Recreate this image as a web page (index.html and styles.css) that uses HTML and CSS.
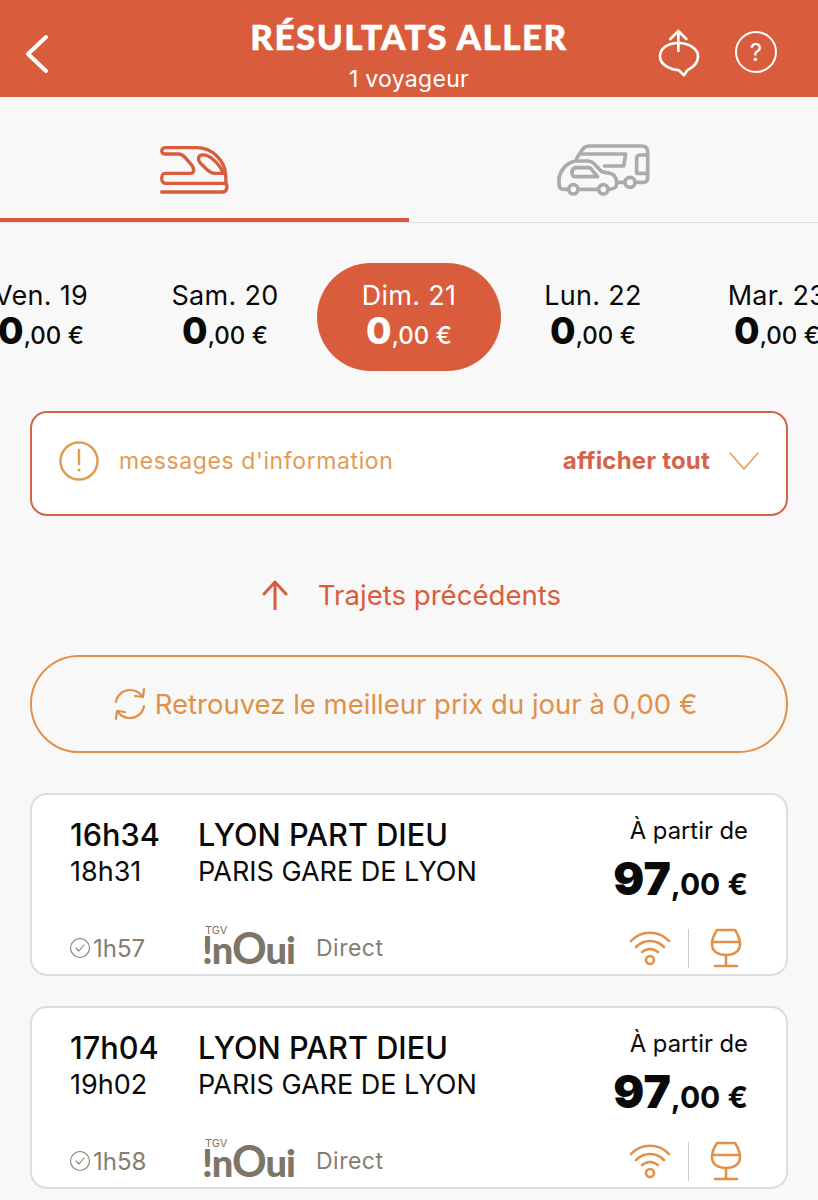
FILE: index.html
```html
<!DOCTYPE html>
<html lang="fr">
<head>
    <meta charset="UTF-8">
    <meta name="viewport" content="width=device-width, initial-scale=1.0">
    <title>Résultats aller</title>
    <link rel="stylesheet" href="styles.css">
</head>
<body>
    <header class="topbar">
        <div class="topbar-left">
            <svg class="back" width="24" height="40" viewBox="0 0 24 40"><path d="M21 3 L3 20 L21 37"/></svg>
        </div>
        <div class="topbar-title">
            <h1>RÉSULTATS ALLER</h1>
            <p>1 voyageur</p>
        </div>
        <div class="topbar-right">
            <svg class="share" width="50" height="60" viewBox="45 20 140 180"><path d="M113 92 V32 M89 56 L113 32 L137 56"/><path d="M113 68 C80 68 58 85 58 108 C58 135 90 148 115 150 L130 165 L140 150 C160 140 172 125 172 108 C172 85 145 68 113 68 Z"/></svg>
            <div class="help">?</div>
        </div>
    </header>

    <nav class="tabs">
        <div class="tab tab-active">
            <svg class="tab-train" width="110" height="75" viewBox="0 0 330 225"><path d="M75 53 H170 C215 53 255 90 257 135 L258 160 H75 C62 160 62 130 75 130 H150 C162 130 165 118 155 105 L135 82 C128 74 122 72 115 72 H75 C62 72 62 53 75 53 Z"/><path d="M185 75 C205 72 235 95 250 130 H225 C210 130 200 118 180 98 C172 88 175 76 185 75 Z"/><path d="M65 186 H248 C262 186 264 165 256 160"/></svg>
        </div>
        <div class="tab">
            <svg class="tab-car" width="120" height="75" viewBox="0 0 360 225"><path d="M95 85 L113 58 C118 50 125 48 135 48 H290 C302 48 308 55 308 65 V145 C308 153 302 157 295 157 H270"/><circle cx="255" cy="157" r="15"/><path d="M240 157 H220"/><path d="M110 72 H242 L236 108 H178"/><path d="M302 75 H284 C278 75 275 80 275 85 V130 H302"/><path d="M70 178 H55 C45 178 42 170 42 160 V145 C45 125 60 100 90 93 H130 C145 93 155 110 170 125 L195 130 C208 133 215 145 215 160 C215 172 210 178 190 178"/><path d="M160 178 H100"/><circle cx="85" cy="178" r="14"/><circle cx="175" cy="178" r="14"/><path d="M90 113 H135 L158 140 H90 C80 140 76 118 90 113 Z"/></svg>
        </div>
    </nav>

    <section class="dates">
        <div class="date"><span class="date-day">Ven. 19</span><span class="date-price"><b>0</b>,00 €</span></div>
        <div class="date"><span class="date-day">Sam. 20</span><span class="date-price"><b>0</b>,00 €</span></div>
        <div class="date date-active"><span class="date-day">Dim. 21</span><span class="date-price"><b>0</b>,00 €</span></div>
        <div class="date"><span class="date-day">Lun. 22</span><span class="date-price"><b>0</b>,00 €</span></div>
        <div class="date"><span class="date-day">Mar. 23</span><span class="date-price"><b>0</b>,00 €</span></div>
    </section>

    <section class="info">
        <svg class="info-icon" width="42" height="42" viewBox="0 0 42 42"><circle cx="21" cy="21" r="18.5"/><path d="M21 10 V24"/><circle class="dot" cx="21" cy="30" r="1.6"/></svg>
        <span class="info-text">messages d'information</span>
        <span class="info-all">afficher tout</span>
        <svg class="info-chevron" width="30" height="20" viewBox="0 0 30 20"><path d="M1 2 L15 18 L29 2"/></svg>
    </section>

    <div class="previous">
        <svg width="26" height="30" viewBox="0 0 26 30"><path d="M13 29 V2 M2 14 L13 2 L24 14"/></svg>
        <span>Trajets précédents</span>
    </div>

    <div class="best-price">
        <svg width="34" height="34" viewBox="0 0 34 34"><path d="M3 15 C4 8 10 3 17 3 C22 3 26 5 29 9"/><path d="M31 2 L30 10 L22 9"/><path d="M31 19 C30 26 24 31 17 31 C12 31 8 29 5 25"/><path d="M3 32 L4 24 L12 25"/></svg>
        <span>Retrouvez le meilleur prix du jour à 0,00 €</span>
    </div>

    <main class="results">
        <article class="card">
            <div class="card-main">
                <div class="times"><strong>16h34</strong><span>18h31</span></div>
                <div class="stations"><strong>LYON PART DIEU</strong><span>PARIS GARE DE LYON</span></div>
                <div class="price"><span class="price-from">À partir de</span><span class="price-value"><b>97</b>,00 €</span></div>
            </div>
            <div class="card-foot">
                <div class="duration">
                    <svg width="22" height="22" viewBox="0 0 22 22"><circle cx="11" cy="11" r="9.5"/><path d="M7 11 L10 14 L15 8"/></svg>
                    <span>1h57</span>
                </div>
                <div class="train-type">
                    <div class="logo"><span class="logo-tgv">TGV</span><span class="logo-name">!n<i>O</i>ui</span></div>
                    <span class="direct">Direct</span>
                </div>
                <div class="services">
                    <svg width="42" height="38" viewBox="0 0 42 38"><path d="M2 12 C12 1 30 1 40 12"/><path d="M7 18 C15 10 27 10 35 18"/><path d="M13 23 C18 19 24 19 29 23"/><circle cx="21" cy="31" r="4"/></svg>
                    <div class="services-sep"></div>
                    <svg width="32" height="40" viewBox="0 0 32 40"><path d="M7 2 H25 C29 8 30 13 30 16 C30 24 23 27 16 27 C9 27 2 24 2 16 C2 13 3 8 7 2 Z"/><path d="M2 14 H30"/><path d="M16 27 V37 M5 38 H27"/></svg>
                </div>
            </div>
        </article>

        <article class="card">
            <div class="card-main">
                <div class="times"><strong>17h04</strong><span>19h02</span></div>
                <div class="stations"><strong>LYON PART DIEU</strong><span>PARIS GARE DE LYON</span></div>
                <div class="price"><span class="price-from">À partir de</span><span class="price-value"><b>97</b>,00 €</span></div>
            </div>
            <div class="card-foot">
                <div class="duration">
                    <svg width="22" height="22" viewBox="0 0 22 22"><circle cx="11" cy="11" r="9.5"/><path d="M7 11 L10 14 L15 8"/></svg>
                    <span>1h58</span>
                </div>
                <div class="train-type">
                    <div class="logo"><span class="logo-tgv">TGV</span><span class="logo-name">!n<i>O</i>ui</span></div>
                    <span class="direct">Direct</span>
                </div>
                <div class="services">
                    <svg width="42" height="38" viewBox="0 0 42 38"><path d="M2 12 C12 1 30 1 40 12"/><path d="M7 18 C15 10 27 10 35 18"/><path d="M13 23 C18 19 24 19 29 23"/><circle cx="21" cy="31" r="4"/></svg>
                    <div class="services-sep"></div>
                    <svg width="32" height="40" viewBox="0 0 32 40"><path d="M7 2 H25 C29 8 30 13 30 16 C30 24 23 27 16 27 C9 27 2 24 2 16 C2 13 3 8 7 2 Z"/><path d="M2 14 H30"/><path d="M16 27 V37 M5 38 H27"/></svg>
                </div>
            </div>
        </article>
    </main>
</body>
</html>
```

FILE: styles.css
```css
body {
    margin: 0;
    height: 1200px;
    overflow: hidden;
    background-color: #f8f8f8;
    color: #0a0a0a;
    font-family: Inter, "Liberation Sans", sans-serif;
}
svg {
    display: block;
    flex: none;
    fill: none;
    stroke-linecap: round;
    stroke-linejoin: round;
}

/* top bar */
.topbar {
    height: 97px;
    display: grid;
    grid-template-columns: 1fr auto 1fr;
    background-color: #d95d3c;
    color: #fff;
}
.topbar-left {
    padding: 34px 0 0 25px;
}
.back {
    stroke: #fff;
    stroke-width: 4;
}
.topbar-title {
    text-align: center;
    padding-top: 16px;
}
.topbar-title h1 {
    margin: 0;
    font-family: Lato, sans-serif;
    font-size: 35px;
    font-weight: 900;
    line-height: 40px;
    letter-spacing: 1.45px;
    -webkit-text-stroke: 0.5px #fff;
}
.topbar-title p {
    margin: 8px 0 0;
    font-size: 23px;
    line-height: 30px;
    letter-spacing: 0.3px;
}
.topbar-right {
    display: flex;
    justify-content: flex-end;
    align-items: flex-start;
    gap: 31px;
    padding: 25px 41px 0 0;
}
.share {
    stroke: #fff;
    stroke-width: 8;
    margin-top: 2px;
}
.help {
    width: 38px;
    height: 38px;
    margin-top: 6px;
    border: 2px solid #fff;
    border-radius: 50%;
    display: flex;
    align-items: center;
    justify-content: center;
    font-size: 24px;
}

/* tabs */
.tabs {
    display: flex;
    height: 126px;
    box-sizing: border-box;
    border-bottom: 1px solid #ddd;
}
.tab {
    width: 50%;
    display: flex;
    justify-content: center;
    padding: 33px 17px 0 0;
    box-sizing: border-box;
}
.tab-active {
    height: 125px;
    border-bottom: 4px solid #d95d3c;
    padding-right: 19px;
}
.tab-train {
    stroke: #d95d3c;
    stroke-width: 10;
}
.tab-car {
    stroke: #ababab;
    stroke-width: 11;
}

/* date strip */
.dates {
    display: flex;
    justify-content: center;
    margin-top: 40px;
    height: 108px;
    overflow: hidden;
}
.date {
    flex: none;
    width: 184px;
    height: 108px;
    display: flex;
    flex-direction: column;
    align-items: center;
    padding-top: 17px;
    box-sizing: border-box;
}
.date-active {
    background-color: #d95d3c;
    color: #fff;
    border-radius: 54px;
}
.date-day {
    font-size: 27px;
    line-height: 32px;
    letter-spacing: 0.3px;
}
.date-price {
    font-size: 24px;
    font-weight: 500;
    line-height: 37px;
}
.date-price b {
    font-size: 37px;
    line-height: 37px;
    font-weight: 800;
}

/* information box */
.info {
    margin: 40px 30px 0;
    height: 105px;
    box-sizing: border-box;
    display: flex;
    align-items: center;
    padding: 0 27px 6px 26px;
    background-color: #fff;
    border: 2px solid #d5634a;
    border-radius: 17px;
}
.info-icon {
    stroke: #e39a55;
    stroke-width: 2.5;
}
.info-icon .dot {
    fill: #e39a55;
    stroke: none;
}
.info-text {
    margin-left: 19px;
    font-size: 23px;
    letter-spacing: 0.6px;
    color: #e39a55;
}
.info-all {
    margin-left: auto;
    font-size: 24px;
    font-weight: 700;
    color: #d5634a;
    letter-spacing: 0.2px;
}
.info-chevron {
    margin-left: 19px;
    stroke: #e39a55;
    stroke-width: 1.5;
}

/* links */
.previous {
    margin-top: 64px;
    height: 30px;
    display: flex;
    align-items: center;
    justify-content: center;
    gap: 30px;
    padding-left: 5px;
    font-size: 27.6px;
    color: #d95d3c;
}
.previous svg {
    stroke: #d95d3c;
    stroke-width: 3;
}
.best-price {
    margin: 45px 30px 0;
    height: 98px;
    box-sizing: border-box;
    display: flex;
    align-items: center;
    justify-content: center;
    gap: 8px;
    padding-right: 8px;
    border: 2px solid #e39148;
    border-radius: 49px;
    font-size: 27.5px;
    color: #e09048;
}
.best-price svg {
    stroke: #e09048;
    stroke-width: 2.2;
}

/* result cards */
.results {
    margin: 40px 30px 0;
    display: flex;
    flex-direction: column;
    gap: 30px;
}
.card {
    height: 183px;
    box-sizing: border-box;
    padding: 18px 38px 0;
    background-color: #fff;
    border: 2px solid #ddd;
    border-radius: 17px;
}
.card-main {
    display: flex;
    height: 113px;
}
.times, .stations {
    display: flex;
    flex-direction: column;
}
.times {
    width: 128px;
}
.stations {
    flex: 1;
}
.times strong, .stations strong {
    font-size: 30.7px;
    font-weight: 500;
    line-height: 44px;
}
.times span, .stations span {
    font-size: 27px;
    line-height: 30px;
}
.price {
    display: flex;
    flex-direction: column;
    align-items: flex-end;
}
.price-from {
    font-size: 23.8px;
    line-height: 36px;
}
.price-value {
    margin-top: 3px;
    font-size: 30px;
    font-weight: 700;
    line-height: 52px;
}
.price-value b {
    font-size: 46px;
    line-height: 52px;
    font-weight: 900;
}
.card-foot {
    display: flex;
    align-items: center;
    height: 44px;
    color: #857d70;
    font-size: 24px;
}
.duration {
    width: 128px;
    display: flex;
    align-items: center;
    gap: 2px;
    margin-left: -1px;
}
.duration svg {
    stroke: #857d70;
    stroke-width: 1.1;
}
.train-type {
    flex: 1;
    display: flex;
    align-items: center;
    gap: 21px;
}
.direct {
    font-size: 23px;
    letter-spacing: 0.5px;
}
.logo {
    margin-left: 5px;
    width: 93px;
    display: flex;
    flex-direction: column;
    color: #7d7568;
}
.logo-tgv {
    font-size: 11px;
    line-height: 10px;
    margin: -7px 0 -2px 3px;
}
.logo-name {
    font-family: Lato, sans-serif;
    font-size: 38px;
    font-weight: 900;
    line-height: 30px;
    letter-spacing: -1.2px;
    white-space: nowrap;
}
.logo-name i {
    font-style: normal;
    font-size: 43px;
    font-weight: 700;
}
.services {
    display: flex;
    align-items: center;
    margin-right: 6px;
}
.services svg {
    stroke: #e39148;
    stroke-width: 2.6;
}
.services-sep {
    width: 1px;
    height: 39px;
    margin: 0 21px 0 17px;
    background-color: #ccc;
}
```
